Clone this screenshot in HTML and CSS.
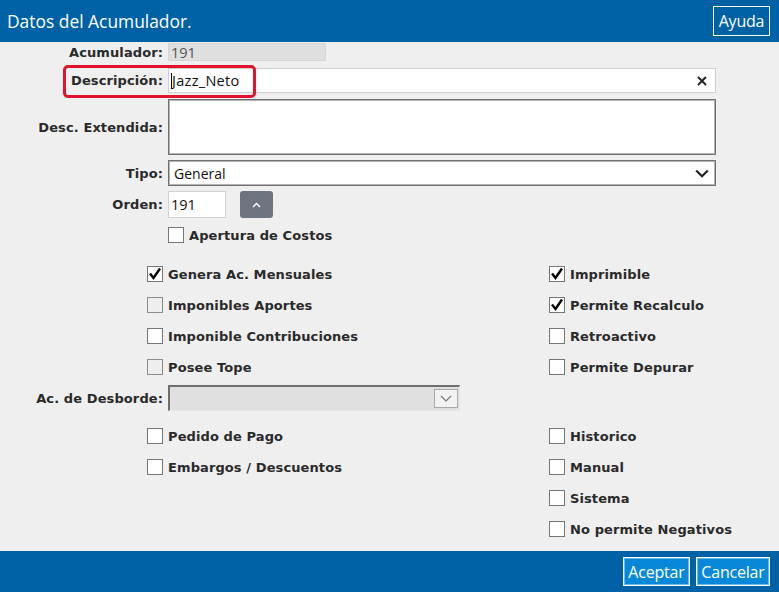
FILE: index.html
```html
<!DOCTYPE html>
<html lang="es">
<head>
<meta charset="utf-8">
<title>Datos del Acumulador</title>
<link rel="stylesheet" href="styles.css">
</head>
<body>
<div class="dialog">
  <header class="titlebar">
    <h1 class="title">Datos del Acumulador.</h1>
    <button class="btn-help" type="button">Ayuda</button>
  </header>

  <main class="content">
    <div class="row row-acum">
      <span class="lbl">Acumulador:</span>
      <div class="field field-readonly">191</div>
    </div>

    <div class="row row-desc">
      <span class="highlight"></span>
      <span class="lbl">Descripción:</span>
      <div class="field field-text">
        <span class="caret"></span><span class="value">Jazz_Neto</span>
        <svg class="clear-icon" width="10" height="10" viewBox="0 0 10 10"><path d="M1 1 L9 9 M9 1 L1 9" stroke="#222" stroke-width="1.9" fill="none"/></svg>
      </div>
    </div>

    <div class="row row-ext">
      <span class="lbl">Desc. Extendida:</span>
      <div class="field field-area"></div>
    </div>

    <div class="row row-tipo">
      <span class="lbl">Tipo:</span>
      <div class="field field-select">
        <span class="value">General</span>
        <svg class="chev" width="14" height="9" viewBox="0 0 14 9"><path d="M1.2 1.5 L7 7.2 L12.8 1.5" stroke="#222" stroke-width="2.2" fill="none"/></svg>
      </div>
    </div>

    <div class="row row-orden">
      <span class="lbl">Orden:</span>
      <div class="field field-num">191</div>
      <button class="btn-up" type="button"><svg width="9" height="6" viewBox="0 0 9 6"><path d="M1 5 L4.5 1.5 L8 5" stroke="#fff" stroke-width="1.4" fill="none"/></svg></button>
    </div>

    <div class="row row-apertura">
      <span class="lbl"></span>
      <label class="check"><span class="box"></span>Apertura de Costos</label>
    </div>

    <div class="checks checks-top">
      <div class="col col-left">
        <label class="check"><span class="box checked"><svg width="16" height="16" viewBox="0 0 16 16"><path d="M3 7.5 L6.5 12 L13 2.5" stroke="#000" stroke-width="2.4" fill="none"/></svg></span>Genera Ac. Mensuales</label>
        <label class="check"><span class="box disabled"></span>Imponibles Aportes</label>
        <label class="check"><span class="box"></span>Imponible Contribuciones</label>
        <label class="check"><span class="box disabled"></span>Posee Tope</label>
      </div>
      <div class="col col-right">
        <label class="check"><span class="box checked"><svg width="16" height="16" viewBox="0 0 16 16"><path d="M3 7.5 L6.5 12 L13 2.5" stroke="#000" stroke-width="2.4" fill="none"/></svg></span>Imprimible</label>
        <label class="check"><span class="box checked"><svg width="16" height="16" viewBox="0 0 16 16"><path d="M3 7.5 L6.5 12 L13 2.5" stroke="#000" stroke-width="2.4" fill="none"/></svg></span>Permite Recalculo</label>
        <label class="check"><span class="box"></span>Retroactivo</label>
        <label class="check"><span class="box"></span>Permite Depurar</label>
      </div>
    </div>

    <div class="row row-desborde">
      <span class="lbl">Ac. de Desborde:</span>
      <div class="field field-disabled-select">
        <span class="dd-btn"><svg width="12" height="7" viewBox="0 0 12 7"><path d="M1 1 L6 6 L11 1" stroke="#777" stroke-width="1.2" fill="none"/></svg></span>
      </div>
    </div>

    <div class="checks checks-bottom">
      <div class="col col-left">
        <label class="check"><span class="box"></span>Pedido de Pago</label>
        <label class="check"><span class="box"></span>Embargos / Descuentos</label>
      </div>
      <div class="col col-right">
        <label class="check"><span class="box"></span>Historico</label>
        <label class="check"><span class="box"></span>Manual</label>
        <label class="check"><span class="box"></span>Sistema</label>
        <label class="check"><span class="box"></span>No permite Negativos</label>
      </div>
    </div>
  </main>

  <footer class="footer">
    <button class="btn-foot btn-ok" type="button">Aceptar</button>
    <button class="btn-foot btn-cancel" type="button">Cancelar</button>
  </footer>
</div>
</body>
</html>
```

FILE: styles.css
```css
* {
  box-sizing: border-box;
  margin: 0;
  padding: 0;
}

html,
body {
  width: 779px;
  height: 592px;
  overflow: hidden;
}

body {
  background: #efefef;
  font-family: "DejaVu Sans", Verdana, sans-serif;
  color: #262626;
}

.dialog {
  display: flex;
  flex-direction: column;
  height: 592px;
}

/* ---------- title bar ---------- */
.titlebar {
  height: 42px;
  flex: none;
  background: #0062a6;
  display: flex;
  align-items: center;
  justify-content: space-between;
  padding: 0 9px 0 7px;
}

.title {
  font-family: "Open Sans", sans-serif;
  font-weight: 400;
  font-size: 17.4px;
  color: #fff;
}

.btn-help {
  width: 57px;
  height: 30px;
  background: #0062a6;
  color: #fff;
  border: 1px solid #fff;
  font-family: "Open Sans", sans-serif;
  font-size: 16px;
  letter-spacing: -0.2px;
}

/* ---------- content ---------- */
.content {
  flex: 1;
  padding-top: 1px;
}

.row {
  display: flex;
  align-items: center;
  position: relative;
}

.lbl {
  width: 163px;
  margin-right: 5px;
  flex: none;
  text-align: right;
  font-weight: bold;
  font-size: 13px;
  letter-spacing: 0.1px;
  color: #2a2a2a;
}

.field {
  font-family: "Open Sans", sans-serif;
  font-size: 14.5px;
  color: #111;
  background: #fff;
  display: flex;
  align-items: center;
}

.row-acum {
  height: 18px;
}

.field-readonly {
  width: 158px;
  height: 18px;
  background: #dfdfdf;
  border: 1px solid #d6d6d6;
  color: #555;
  padding-left: 2px;
}

.row-desc {
  margin-top: 7px;
  height: 25px;
}

.highlight {
  position: absolute;
  left: 63px;
  top: -3px;
  width: 193px;
  height: 33px;
  border: 3px solid #e2132e;
  border-radius: 5px;
  pointer-events: none;
}

.field-text {
  width: 548px;
  height: 25px;
  border: 1px solid #cfcfcf;
  padding-left: 2px;
  padding-right: 8px;
}

.caret {
  width: 1px;
  height: 15px;
  background: #000;
}

.field-text .value {
  flex: 1;
  letter-spacing: 0.3px;
}

.clear-icon {
  flex: none;
}

.row-ext {
  margin-top: 6px;
  height: 56px;
}

.field-area {
  width: 548px;
  height: 56px;
  border: 1px solid #707070;
  box-shadow: inset 0 0 0 1px #b4b4b4;
}

.row-tipo {
  margin-top: 5px;
  height: 26px;
}

.field-select {
  width: 548px;
  height: 26px;
  border: 1px solid #707070;
  box-shadow: inset 0 0 0 1px #b4b4b4;
  padding: 0 6px 0 5px;
  font-size: 14px;
  justify-content: space-between;
}

.row-orden {
  margin-top: 5px;
  height: 27px;
}

.field-num {
  width: 58px;
  height: 27px;
  border: 1px solid #d0d0d0;
  padding-left: 2px;
}

.btn-up {
  margin-left: 14px;
  width: 33px;
  height: 27px;
  background: #6c757f;
  border: none;
  border-radius: 3px;
  display: flex;
  align-items: center;
  justify-content: center;
}

.row-apertura {
  margin-top: 9px;
  height: 16px;
}

/* ---------- checkboxes ---------- */
.check {
  display: flex;
  align-items: center;
  height: 16px;
  font-weight: bold;
  font-size: 13px;
  letter-spacing: 0.1px;
  color: #2a2a2a;
  white-space: nowrap;
}

.box {
  width: 16px;
  height: 16px;
  flex: none;
  border: 1px solid #767676;
  background: #fff;
  margin-right: 5px;
  position: relative;
}

.box svg {
  position: absolute;
  left: -1px;
  top: -1px;
}

.box.disabled {
  background: #eeeeee;
  border-color: #8c8c8c;
}

.checks {
  display: flex;
  padding-left: 147px;
}

.col {
  display: flex;
  flex-direction: column;
  gap: 15px;
}

.col-left {
  width: 402px;
}

.checks-top {
  margin-top: 23px;
}

.row-desborde {
  margin-top: 10px;
  height: 26px;
}

.field-disabled-select {
  width: 292px;
  height: 26px;
  background: #e0e0e0;
  border-top: 2px solid #6e6e6e;
  border-left: 2px solid #6e6e6e;
  border-right: 1px solid #e6e6e6;
  border-bottom: 1px solid #e6e6e6;
  justify-content: flex-end;
  padding-right: 1px;
}

.dd-btn {
  width: 24px;
  height: 19px;
  background: #f2f2f2;
  border: 1px solid #a9a9a9;
  display: flex;
  align-items: center;
  justify-content: center;
}

.checks-bottom {
  margin-top: 17px;
}

/* ---------- footer ---------- */
.footer {
  height: 41px;
  flex: none;
  background: #0062a6;
  display: flex;
  justify-content: flex-end;
  align-items: flex-start;
  padding: 6px 9px 0 0;
  gap: 6px;
}

.btn-foot {
  height: 29px;
  background: #0888d8;
  color: #fff;
  border: 1px solid #fff;
  box-shadow: inset 0 0 0 1px #6cb6e8;
  font-family: "Open Sans", sans-serif;
  font-size: 16px;
  letter-spacing: -0.2px;
}

.btn-ok {
  width: 67px;
}

.btn-cancel {
  width: 74px;
}
```
